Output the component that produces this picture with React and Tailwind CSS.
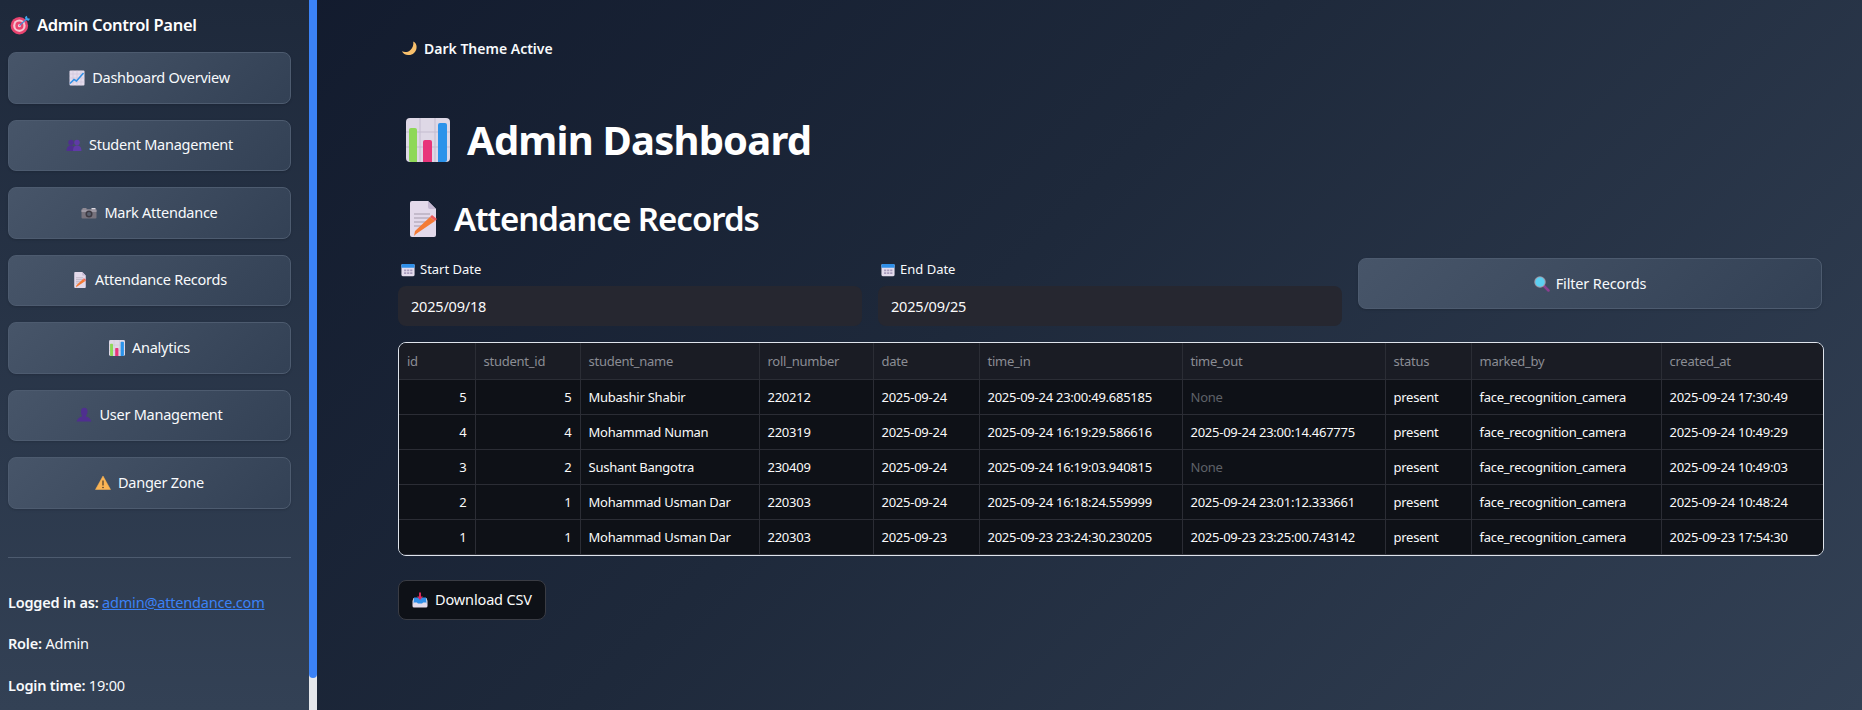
const Target = ({ className }) => (
  <svg viewBox="0 0 32 32" className={className}>
    <circle cx="15" cy="17" r="14" fill="#e8436f" />
    <circle cx="15" cy="17" r="10" fill="#f6c4d2" />
    <circle cx="15" cy="17" r="6.5" fill="#e8436f" />
    <circle cx="15" cy="17" r="2.5" fill="#f6c4d2" />
    <path d="M15 17 27 6" stroke="#3f8fd8" strokeWidth="2" />
    <path d="m24 3 1 5 5 1 2-3-4-1-1-4z" fill="#41a5ee" />
  </svg>
)

const ChartUp = ({ className }) => (
  <svg viewBox="0 0 32 32" className={className}>
    <rect x="1" y="1" width="30" height="30" rx="2" fill="#e4dcec" />
    <path d="M8 1v30M16 1v30M24 1v30M1 8h30M1 16h30M1 24h30" stroke="#c9bdd6" strokeWidth="1" />
    <path d="m2 27 8-8 5 3L29 6" fill="none" stroke="#2e8fe6" strokeWidth="3" />
  </svg>
)

const Busts = ({ className }) => (
  <svg viewBox="0 0 32 32" className={className}>
    <circle cx="10" cy="11" r="5.5" fill="#4f2f8f" />
    <path d="M1 28c0-8 4-11 9-11s8 3 8 11z" fill="#4f2f8f" />
    <circle cx="22" cy="11" r="5.5" fill="#5f3aa6" />
    <path d="M14 28c0-8 3-11 8-11s9 3 9 11z" fill="#5f3aa6" />
  </svg>
)

const Camera = ({ className }) => (
  <svg viewBox="0 0 32 32" className={className}>
    <rect x="3" y="6" width="8" height="4" fill="#8f8a94" />
    <rect x="21" y="6" width="8" height="4" fill="#e0dce4" />
    <rect x="1" y="9" width="30" height="18" rx="2" fill="#77727c" />
    <rect x="1" y="9" width="30" height="5" fill="#9d98a3" />
    <circle cx="16" cy="18" r="7" fill="#3d3942" />
    <circle cx="16" cy="18" r="4" fill="#59606e" />
  </svg>
)

const Memo = ({ className }) => (
  <svg viewBox="0 0 28 36" className={className}>
    <path d="M1 2a2 2 0 0 1 2-2h16l8 8v26a2 2 0 0 1-2 2H3a2 2 0 0 1-2-2z" fill="#e3d9ea" />
    <path d="M19 0v6a2 2 0 0 0 2 2h6z" fill="#c5b8d2" />
    <path d="M5 13h16M5 17h16M5 21h13M5 25h9" stroke="#a69cab" strokeWidth="1.2" />
    <path d="m7 33-2 2 1-5L21 16l5 4z" fill="#f47b36" />
    <path d="m21 16 2-2 5 4-2 2z" fill="#ef5a5a" />
  </svg>
)

const BarChart = ({ className }) => (
  <svg viewBox="0 0 44 44" className={className}>
    <rect width="44" height="44" rx="4" fill="#ded8e6" />
    <path d="M14 0v44M29 0v44M0 14h44M0 29h44" stroke="#c4bccf" strokeWidth="1" />
    <path d="M3 12a2 2 0 0 1 2-2h4a2 2 0 0 1 2 2v32H5a2 2 0 0 1-2-2z" fill="#8ed857" />
    <path d="M17 24a2 2 0 0 1 2-2h5a2 2 0 0 1 2 2v20h-9z" fill="#e8357a" />
    <path d="M32 7a2 2 0 0 1 2-2h5a2 2 0 0 1 2 2v35a2 2 0 0 1-2 2h-7z" fill="#2b93ea" />
  </svg>
)

const Bust = ({ className }) => (
  <svg viewBox="0 0 32 32" className={className}>
    <path d="M10 9a6.5 7.5 0 0 1 13 0c0 4-2 7-3 8v2c4 1 9 4 11 10H1c2-6 7-9 11-10v-2c-1-1-2-4-2-8z" fill="#4f2f8f" />
  </svg>
)

const Warning = ({ className }) => (
  <svg viewBox="0 0 32 32" className={className}>
    <path d="M16 2 31 29H1z" fill="#fbb454" stroke="#fbb454" strokeWidth="1" strokeLinejoin="round" />
    <path d="M16 11v10" stroke="#473a2a" strokeWidth="2.4" />
    <circle cx="16" cy="25" r="1.6" fill="#473a2a" />
  </svg>
)

const Moon = ({ className }) => (
  <svg viewBox="0 0 32 32" className={className}>
    <path d="M24 1c5 2 8 8 7 14-1 9-9 16-18 15C7 30 2 27 0 22c6 3 13 2 18-3 5-4 7-11 6-18z" fill="#f8c06c" />
  </svg>
)

const Calendar = ({ className }) => (
  <svg viewBox="0 0 32 32" className={className}>
    <rect x="1" y="2" width="30" height="28" rx="3" fill="#e4dcec" />
    <path d="M1 5a3 3 0 0 1 3-3h24a3 3 0 0 1 3 3v6H1z" fill="#2f8fe8" />
    <path d="M7 15h5v4H7zM14 15h5v4h-5zM21 15h5v4h-5zM7 21h5v4H7zM14 21h5v4h-5zM21 21h5v4h-5z" fill="#a79abb" />
  </svg>
)

const Magnifier = ({ className }) => (
  <svg viewBox="0 0 32 32" className={className}>
    <path d="m20 20 9 9" stroke="#8a3f90" strokeWidth="5" strokeLinecap="round" />
    <circle cx="12" cy="12" r="11.5" fill="#9f9aa8" />
    <circle cx="12" cy="12" r="9.5" fill="#5cd0f2" />
  </svg>
)

const Inbox = ({ className }) => (
  <svg viewBox="0 0 32 32" className={className}>
    <path d="M3 12h26l2 6v10a3 3 0 0 1-3 3H4a3 3 0 0 1-3-3V18z" fill="#e4dcec" />
    <path d="M4 11h24l1 12H3z" fill="#2f8fe8" />
    <path d="M3 21h7l2 3h8l2-3h7v7a2 2 0 0 1-2 2H5a2 2 0 0 1-2-2z" fill="#e4dcec" />
    <path d="M14 1h4v8h4l-6 7-6-7h4z" fill="#d8285c" />
  </svg>
)

const navItems = [
  { label: 'Dashboard Overview', Icon: ChartUp },
  { label: 'Student Management', Icon: Busts },
  { label: 'Mark Attendance', Icon: Camera },
  { label: 'Attendance Records', Icon: Memo },
  { label: 'Analytics', Icon: BarChart },
  { label: 'User Management', Icon: Bust },
  { label: 'Danger Zone', Icon: Warning },
]

const columns = [
  { name: 'id', width: 'w-[76px]' },
  { name: 'student_id', width: 'w-[105px]' },
  { name: 'student_name', width: 'w-[179px]' },
  { name: 'roll_number', width: 'w-[114px]' },
  { name: 'date', width: 'w-[106px]' },
  { name: 'time_in', width: 'w-[203px]' },
  { name: 'time_out', width: 'w-[203px]' },
  { name: 'status', width: 'w-[86px]' },
  { name: 'marked_by', width: 'w-[190px]' },
  { name: 'created_at', width: 'w-[162px]' },
]

const records = [
  [5, 5, 'Mubashir Shabir', '220212', '2025-09-24', '2025-09-24 23:00:49.685185', 'None', 'present', 'face_recognition_camera', '2025-09-24 17:30:49'],
  [4, 4, 'Mohammad Numan', '220319', '2025-09-24', '2025-09-24 16:19:29.586616', '2025-09-24 23:00:14.467775', 'present', 'face_recognition_camera', '2025-09-24 10:49:29'],
  [3, 2, 'Sushant Bangotra', '230409', '2025-09-24', '2025-09-24 16:19:03.940815', 'None', 'present', 'face_recognition_camera', '2025-09-24 10:49:03'],
  [2, 1, 'Mohammad Usman Dar', '220303', '2025-09-24', '2025-09-24 16:18:24.559999', '2025-09-24 23:01:12.333661', 'present', 'face_recognition_camera', '2025-09-24 10:48:24'],
  [1, 1, 'Mohammad Usman Dar', '220303', '2025-09-23', '2025-09-23 23:24:30.230205', '2025-09-23 23:25:00.743142', 'present', 'face_recognition_camera', '2025-09-23 17:54:30'],
]

const Sidebar = () => (
  <aside className="w-[309px] h-[710px] shrink-0 overflow-hidden bg-[linear-gradient(180deg,#1e293b,#334155)] px-2 pt-[14px]">
    <div className="flex items-center h-[22px] pl-[2px] gap-[7px] text-white text-[16.5px] font-semibold tracking-[-0.3px]">
      <Target className="w-5 h-5" />
      <span>Admin Control Panel</span>
    </div>
    <div className="mt-[16px] flex flex-col gap-4 w-[283px]">
      {navItems.map(({ label, Icon }) => (
        <button
          key={label}
          className="h-[51.5px] flex items-center justify-center gap-[7px] rounded-lg border border-[#4d5b6f] bg-[linear-gradient(135deg,#475569,#334155)] text-[14.5px] tracking-[-0.25px] text-[#f8fafc] shadow-sm"
        >
          <Icon className="w-4 h-4" />
          {label}
        </button>
      ))}
    </div>
    <hr className="mt-[48px] w-[283px] border-t border-[#4d5b6f]" />
    <div className="mt-[35px] flex flex-col gap-[22px] text-[14.5px] leading-[19.5px] tracking-[-0.2px] text-[#f8fafc]">
      <p><b className="font-semibold">Logged in as:</b> <a href="#" className="text-[#3b82f6] underline">admin@attendance.com</a></p>
      <p><b className="font-semibold">Role:</b> Admin</p>
      <p><b className="font-semibold">Login time:</b> 19:00</p>
    </div>
  </aside>
)

const Scrollbar = () => (
  <div className="w-2 h-[710px] shrink-0 bg-[#e5e7eb]">
    <div className="h-[678px] rounded-b-sm bg-[#3b82f6]" />
  </div>
)

const RecordsTable = () => (
  <div className="w-[1426px] h-[214px] overflow-hidden rounded-lg border-[1.5px] border-[#dfe4ec]">
    <table className="w-full table-fixed border-collapse text-[13px] tracking-[-0.25px]">
      <thead>
        <tr className="h-9 bg-[#1a1c24] text-left text-[#8b8d94]">
          {columns.map(col => (
            <th key={col.name} className={`${col.width} border-r border-b border-[#2b2d35] px-2 pt-0.5 font-normal last:border-r-0`}>
              {col.name}
            </th>
          ))}
        </tr>
      </thead>
      <tbody>
        {records.map(row => (
          <tr key={row[0]} className="h-[35px] bg-[#0e1117] text-[#fafafa]">
            {row.map((value, i) => (
              <td
                key={i}
                className={`border-r border-b border-[#2b2d35] px-2 pt-0.5 whitespace-nowrap last:border-r-0 ${i < 2 ? 'text-right' : ''} ${value === 'None' ? 'text-[#5f6168]' : ''}`}
              >
                {value}
              </td>
            ))}
          </tr>
        ))}
      </tbody>
    </table>
  </div>
)

const DateField = ({ label, value }) => (
  <div className="w-[464px]">
    <label className="flex items-center h-[20px] pl-[3px] gap-[5px] text-[13px] text-[#f8fafc]">
      <Calendar className="w-[14px] h-[14px]" />
      {label}
    </label>
    <div className="mt-[6px] h-10 flex items-center rounded-lg bg-[#262730] pl-[13px] pt-0.5 text-[14.5px] tracking-[-0.2px] text-[#fafafa]">{value}</div>
  </div>
)

export default function App() {
  return (
    <div className="flex w-[1862px] h-[710px] overflow-hidden bg-[linear-gradient(135deg,#0f172a_0%,#1e293b_50%,#334155_100%)] font-['Noto_Sans',sans-serif]">
      <Sidebar />
      <Scrollbar />
      <main className="flex-1 pl-[81px] pt-[37px]">
        <div className="flex items-center h-[22px] pl-[4px] gap-[7px] text-[14px] font-semibold text-[#f8fafc]">
          <Moon className="w-[15px] h-[15px]" />
          Dark Theme Active
        </div>
        <div className="mt-[59px] flex items-center h-[44px] pl-2 gap-[17px] text-[40px] font-bold tracking-[-0.8px] text-white">
          <BarChart className="w-[44px] h-[44px]" />
          <h1>Admin Dashboard</h1>
        </div>
        <div className="mt-[39px] flex items-center h-[36px] pl-[11px] gap-[17px] text-[33px] font-semibold tracking-[-1px] text-white">
          <Memo className="w-[28px] h-[36px]" />
          <h2>Attendance Records</h2>
        </div>
        <div className="mt-[23px] flex gap-4">
          <DateField label="Start Date" value="2025/09/18" />
          <DateField label="End Date" value="2025/09/25" />
          <button className="mt-[-2px] w-[464px] h-[51px] flex items-center justify-center gap-[6px] rounded-lg border border-[#4d5b6f] bg-[linear-gradient(135deg,#475569,#334155)] text-[14.5px] tracking-[-0.15px] text-[#f8fafc] shadow-sm">
            <Magnifier className="w-4 h-4" />
            Filter Records
          </button>
        </div>
        <div className="mt-4">
          <RecordsTable />
        </div>
        <button className="mt-6 w-[148px] h-10 flex items-center justify-center gap-[7px] rounded-lg border border-[#3a3c44] bg-[#0e1117] text-[14.5px] tracking-[-0.15px] text-[#fafafa]">
          <Inbox className="w-4 h-4" />
          Download CSV
        </button>
      </main>
    </div>
  )
}
